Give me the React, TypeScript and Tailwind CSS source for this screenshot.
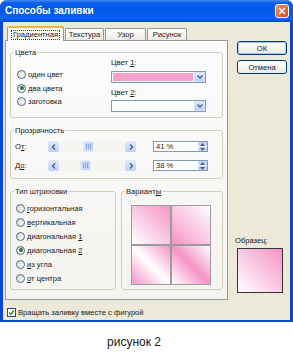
import React from "react";

function Radio({ checked = false }: { checked?: boolean }) {
  return (
    <span className="w-[9px] h-[9px] rounded-full border border-[#4a6a8c] bg-[linear-gradient(135deg,#d8d8d0,#ffffff)] flex items-center justify-center shrink-0">
      {checked && <span className="w-[4px] h-[4px] rounded-full bg-[#2e6e3a]" />}
    </span>
  );
}

function RadioRow({ label, checked = false, h = "h-[13.5px]" }: { label: React.ReactNode; checked?: boolean; h?: string }) {
  return (
    <div className={`flex items-center gap-[2px] ${h}`}>
      <Radio checked={checked} />
      <span className="leading-[9px]">{label}</span>
    </div>
  );
}

function Chevron({ dir }: { dir: "down" | "left" | "right" | "up" }) {
  const paths: Record<string, string> = {
    down: "M1.5 2.5 L4 5 L6.5 2.5",
    up: "M1.5 5 L4 2.5 L6.5 5",
    left: "M5 1.5 L2.5 4 L5 6.5",
    right: "M3 1.5 L5.5 4 L3 6.5",
  };
  return (
    <svg width="8" height="8" viewBox="0 0 8 8">
      <path d={paths[dir]} fill="none" stroke="#4d6185" strokeWidth="1.4" />
    </svg>
  );
}

function Combo({ pink = false }: { pink?: boolean }) {
  return (
    <div className="flex h-[12px] w-[95px] border border-[#7F9DB9] bg-white">
      <div className={`flex-1 m-[1px] ${pink ? "bg-[#F7A0CD]" : "bg-white"}`} />
      <div className="w-[11px] bg-[linear-gradient(180deg,#dfe8fd,#b9cdf7)] border border-[#d6e1fb] flex items-center justify-center">
        <Chevron dir="down" />
      </div>
    </div>
  );
}

function ScrollBar({ thumbOffset }: { thumbOffset: number }) {
  return (
    <div className="flex h-[11px] w-[88px] bg-[#f6f5f1]">
      <div className="w-[11px] h-[11px] rounded-[2px] bg-[linear-gradient(180deg,#e3ebfd,#bccff8)] flex items-center justify-center">
        <Chevron dir="left" />
      </div>
      <div className="flex-1 flex">
        <div style={{ marginLeft: thumbOffset }} className="w-[11px] h-[11px] rounded-[2px] bg-[linear-gradient(90deg,#cfdcfa,#c0d1f8)] border border-[#e6edfc] flex items-center justify-center gap-[1px]">
          <span className="w-[1px] h-[5px] bg-[#8ea6d8]" />
          <span className="w-[1px] h-[5px] bg-[#8ea6d8]" />
          <span className="w-[1px] h-[5px] bg-[#8ea6d8]" />
        </div>
      </div>
      <div className="w-[11px] h-[11px] rounded-[2px] bg-[linear-gradient(180deg,#e3ebfd,#bccff8)] flex items-center justify-center">
        <Chevron dir="right" />
      </div>
    </div>
  );
}

function ValueBox({ value }: { value: string }) {
  return (
    <div className="flex h-[11px] w-[55px] border border-[#7F9DB9] bg-white">
      <span className="flex-1 pl-[2px] leading-[9px]">{value}</span>
      <div className="w-[9px] flex flex-col">
        <div className="flex-1 bg-[#c5d5fa] flex items-center justify-center overflow-hidden">
          <svg width="5" height="3" viewBox="0 0 5 3"><path d="M0 3 L2.5 0 L5 3Z" fill="#4d6185" /></svg>
        </div>
        <div className="flex-1 bg-[#c5d5fa] border-t border-white flex items-center justify-center overflow-hidden">
          <svg width="5" height="3" viewBox="0 0 5 3"><path d="M0 0 L2.5 3 L5 0Z" fill="#4d6185" /></svg>
        </div>
      </div>
    </div>
  );
}

function Btn({ children, def = false }: { children: React.ReactNode; def?: boolean }) {
  return (
    <div className="w-[50px] h-[14px] rounded-[3px] border border-[#003C74] bg-[linear-gradient(180deg,#ffffff,#ecebe6)] flex items-center justify-center">
      <div className={`w-full h-full rounded-[2px] flex items-center justify-center ${def ? "border border-[#a6c6f5]" : ""}`}>
        <span className="leading-[9px]">{children}</span>
      </div>
    </div>
  );
}

function U({ children }: { children: React.ReactNode }) {
  return <span className="underline underline-offset-[1px]">{children}</span>;
}

export default function App() {
  return (
    <div className="w-[293px] h-[356px] bg-white flex flex-col font-['Liberation_Sans',Arial,sans-serif] text-[7.6px] text-[#1a1a1a]">
      <div className="w-[293px] h-[322px] flex flex-col rounded-t-[7px] bg-[#0b45d6] overflow-hidden">
        {/* title bar */}
        <div className="h-[22px] flex items-center justify-between pl-[5px] pr-[4px] bg-[linear-gradient(180deg,#3f8cf8_0%,#0b5de9_14%,#0058e6_50%,#0a62ee_85%,#0047d3_100%)]">
          <span className="text-white font-bold text-[10px] leading-[12px]">Способы заливки</span>
          <div className="w-[14px] h-[14px] rounded-[3px] border border-white bg-[linear-gradient(135deg,#f08a63,#d94a1e)] flex items-center justify-center">
            <svg width="8" height="8" viewBox="0 0 8 8">
              <path d="M1 1 L7 7 M7 1 L1 7" stroke="white" strokeWidth="1.6" />
            </svg>
          </div>
        </div>
        {/* body */}
        <div className="flex-1 mx-[3px] mb-[2px] bg-[#ECE9D8] flex flex-col">
          <div className="flex">
            {/* left: tabs + panel */}
            <div className="ml-[2px] w-[223px] pt-[4px] flex flex-col">
              <div className="flex items-end h-[14px] pl-[2px] gap-[1px]">
                <div className="relative z-10 w-[57px] h-[15px] -mb-[1px] border border-b-0 border-[#919B9C] border-t-[2px] border-t-[#f5b541] rounded-t-[2px] bg-[#fcfcfe] flex items-center justify-center">
                  <span className="border border-dotted border-[#444] px-[1px] leading-[8px]">Градиентная</span>
                </div>
                <div className="w-[39px] h-[12px] border border-b-0 border-[#919B9C] rounded-t-[2px] bg-[linear-gradient(180deg,#ffffff,#ecebe5)] flex items-center justify-center">
                  <span className="leading-[9px]">Текстура</span>
                </div>
                <div className="w-[41px] h-[12px] border border-b-0 border-[#919B9C] rounded-t-[2px] bg-[linear-gradient(180deg,#ffffff,#ecebe5)] flex items-center justify-center">
                  <span className="leading-[9px]">Узор</span>
                </div>
                <div className="w-[40px] h-[12px] border border-b-0 border-[#919B9C] rounded-t-[2px] bg-[linear-gradient(180deg,#ffffff,#ecebe5)] flex items-center justify-center">
                  <span className="leading-[9px]">Рисунок</span>
                </div>
              </div>
              <div className="h-[260px] border border-[#919B9C] bg-[linear-gradient(180deg,#fcfcfe,#f4f3ee)] px-[4px] flex flex-col">
                {/* Цвета */}
                <fieldset className="mt-[7px] border border-[#d0d0bf] rounded-[3px]">
                  <legend className="ml-[3px] px-[1px] leading-[9px]">Цвета</legend>
                  <div className="h-[60px] flex">
                    <div className="w-[100px] pl-[6px] pt-[11px] flex flex-col">
                      <RadioRow label="один цвет" />
                      <RadioRow label="два цвета" checked />
                      <RadioRow label="заготовка" />
                    </div>
                    <div className="flex flex-col pt-[1px]">
                      <span className="leading-[9px]">Цвет <U>1</U>:</span>
                      <div className="mt-[4px]"><Combo pink /></div>
                      <span className="mt-[5px] leading-[9px]">Цвет <U>2</U>:</span>
                      <div className="mt-[3px]"><Combo /></div>
                    </div>
                  </div>
                </fieldset>
                {/* Прозрачность */}
                <fieldset className="mt-[8px] border border-[#d0d0bf] rounded-[3px]">
                  <legend className="ml-[3px] px-[1px] leading-[9px]">Прозрачность</legend>
                  <div className="pt-[6px] pb-[7px] pl-[4px] flex flex-col gap-[8px]">
                    <div className="flex items-center h-[11px]">
                      <span className="w-[33px] leading-[9px]">О<U>т</U>:</span>
                      <ScrollBar thumbOffset={24} />
                      <div className="ml-[17px]"><ValueBox value="41 %" /></div>
                    </div>
                    <div className="flex items-center h-[11px]">
                      <span className="w-[33px] leading-[9px]">Д<U>о</U>:</span>
                      <ScrollBar thumbOffset={21} />
                      <div className="ml-[17px]"><ValueBox value="38 %" /></div>
                    </div>
                  </div>
                </fieldset>
                {/* bottom */}
                <div className="mt-[8px] flex gap-[5px]">
                  <fieldset className="w-[106px] border border-[#d0d0bf] rounded-[3px]">
                    <legend className="ml-[3px] px-[1px] leading-[9px]">Тип штриховки</legend>
                    <div className="pl-[5px] pt-[5px] pb-[4px] flex flex-col">
                      <RadioRow h="h-[14px]" label={<><U>г</U>оризонтальная</>} />
                      <RadioRow h="h-[14px]" label={<><U>в</U>ертикальная</>} />
                      <RadioRow h="h-[14px]" label={<>диагональная <U>1</U></>} />
                      <RadioRow h="h-[14px]" label={<>диагональная <U>2</U></>} checked />
                      <RadioRow h="h-[14px]" label={<><U>и</U>з угла</>} />
                      <RadioRow h="h-[14px]" label={<><U>о</U>т центра</>} />
                    </div>
                  </fieldset>
                  <fieldset className="w-[102px] border border-[#d0d0bf] rounded-[3px]">
                    <legend className="ml-[3px] px-[1px] leading-[9px]">Вариант<U>ы</U></legend>
                    <div className="pl-[9px] pt-[9px]">
                      <div className="w-[80px] h-[80px] p-[1px] bg-[#9b9b9b] grid grid-cols-2 gap-[2px]">
                        <div className="bg-[linear-gradient(to_bottom_left,#F593C6,#ffffff)]" />
                        <div className="bg-[linear-gradient(to_bottom_left,#ffffff,#F593C6)]" />
                        <div className="bg-[linear-gradient(to_bottom_left,#F593C6,#ffffff_50%,#F593C6)]" />
                        <div className="bg-[linear-gradient(to_bottom_left,#ffffff,#F593C6_50%,#ffffff)]" />
                      </div>
                    </div>
                  </fieldset>
                </div>
              </div>
            </div>
            {/* right column */}
            <div className="ml-[7px] w-[54px] flex flex-col">
              <div className="ml-[2px] mt-[19px]"><Btn def>ОК</Btn></div>
              <div className="ml-[2px] mt-[5px]"><Btn>Отмена</Btn></div>
              <span className="mt-[162px] leading-[9px]">Образец:</span>
              <div className="ml-[2px] mt-[3px] w-[46px] h-[45px] border border-[#333] bg-[linear-gradient(to_bottom_left,#F593C6,#ffffff)]" />
            </div>
          </div>
          {/* checkbox */}
          <div className="mt-[7px] ml-[4px] flex items-center gap-[2px] h-[11px]">
            <span className="w-[9px] h-[9px] border border-[#1C5180] bg-white flex items-center justify-center">
              <svg width="7" height="7" viewBox="0 0 7 7"><path d="M1 3.5 L2.8 5.3 L6 1.5" fill="none" stroke="#21a121" strokeWidth="1.5" /></svg>
            </span>
            <span className="leading-[9px]">Вращать заливку вместе с фигурой</span>
          </div>
        </div>
      </div>
      <div className="mt-[13px] pl-[107px] text-[12px] leading-[14px] text-[#222]">рисунок 2</div>
    </div>
  );
}
